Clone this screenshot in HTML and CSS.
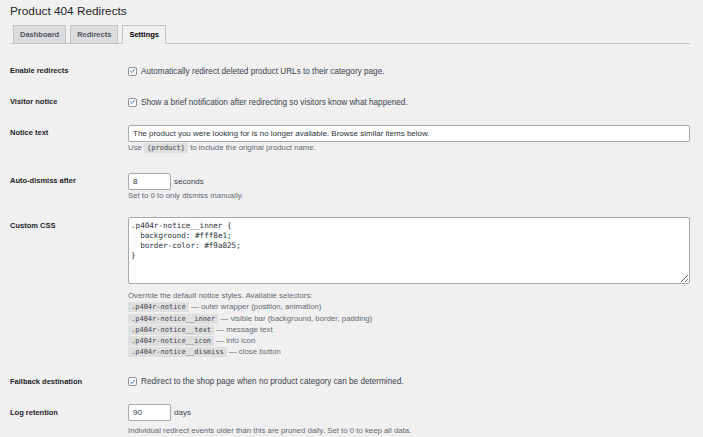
FILE: index.html
```html
<!DOCTYPE html>
<html lang="en">
<head>
<meta charset="utf-8">
<title>Product 404 Redirects</title>
<link rel="stylesheet" href="styles.css">
</head>
<body>
<div class="wrap">
  <h1 class="title">Product 404 Redirects</h1>
  <nav class="tabs">
    <a class="tab">Dashboard</a>
    <a class="tab">Redirects</a>
    <a class="tab tab-active">Settings</a>
  </nav>
  <div class="form">
    <div class="row row-check">
      <div class="label">Enable redirects</div>
      <div class="field">
        <label class="check"><span class="cb"><svg viewBox="0 0 10 10" width="9" height="9"><path d="M2.2 5.2 L4.2 7.2 L7.9 2.6" fill="none" stroke="#2271b1" stroke-width="1.3" stroke-linecap="round" stroke-linejoin="round"/></svg></span>Automatically redirect deleted product URLs to their category page.</label>
      </div>
    </div>
    <div class="row row-check">
      <div class="label">Visitor notice</div>
      <div class="field">
        <label class="check"><span class="cb"><svg viewBox="0 0 10 10" width="9" height="9"><path d="M2.2 5.2 L4.2 7.2 L7.9 2.6" fill="none" stroke="#2271b1" stroke-width="1.3" stroke-linecap="round" stroke-linejoin="round"/></svg></span>Show a brief notification after redirecting so visitors know what happened.</label>
      </div>
    </div>
    <div class="row">
      <div class="label">Notice text</div>
      <div class="field">
        <input class="input input-wide" type="text" value="The product you were looking for is no longer available. Browse similar items below.">
        <p class="desc desc-code">Use <code class="chip">{product}</code> to include the original product name.</p>
      </div>
    </div>
    <div class="row">
      <div class="label">Auto-dismiss after</div>
      <div class="field">
        <div class="inline"><input class="input input-small" type="text" value="8"><span class="unit">seconds</span></div>
        <p class="desc">Set to 0 to only dismiss manually.</p>
      </div>
    </div>
    <div class="row">
      <div class="label">Custom CSS</div>
      <div class="field">
        <textarea class="code-area" rows="6">.p404r-notice__inner {
  background: #fff8e1;
  border-color: #f9a825;
}</textarea>
        <div class="desc desc-list">
          <div>Override the default notice styles. Available selectors:</div>
          <div><code class="chip">.p404r-notice</code> — outer wrapper (position, animation)</div>
          <div><code class="chip">.p404r-notice__inner</code> — visible bar (background, border, padding)</div>
          <div><code class="chip">.p404r-notice__text</code> — message text</div>
          <div><code class="chip">.p404r-notice__icon</code> — info icon</div>
          <div><code class="chip">.p404r-notice__dismiss</code> — close button</div>
        </div>
      </div>
    </div>
    <div class="row row-check">
      <div class="label">Fallback destination</div>
      <div class="field">
        <label class="check"><span class="cb"><svg viewBox="0 0 10 10" width="9" height="9"><path d="M2.2 5.2 L4.2 7.2 L7.9 2.6" fill="none" stroke="#2271b1" stroke-width="1.3" stroke-linecap="round" stroke-linejoin="round"/></svg></span>Redirect to the shop page when no product category can be determined.</label>
      </div>
    </div>
    <div class="row">
      <div class="label">Log retention</div>
      <div class="field">
        <div class="inline"><input class="input input-small" type="text" value="90"><span class="unit">days</span></div>
        <p class="desc desc-late">Individual redirect events older than this are pruned daily. Set to 0 to keep all data.</p>
      </div>
    </div>
  </div>
</div>
</body>
</html>
```

FILE: styles.css
```css
* {
  box-sizing: border-box;
}

html, body {
  margin: 0;
  padding: 0;
  background: #f0f0f1;
}

body {
  font-family: "Liberation Sans", Arial, sans-serif;
  color: #1d2327;
  overflow: hidden;
}

.wrap {
  padding: 0 13px 0 10px;
}

.title {
  margin: 0;
  padding-top: 3px;
  font-size: 11.8px;
  line-height: 16px;
  font-weight: 400;
  color: #1d2327;
}

.tabs {
  display: flex;
  gap: 4px;
  margin-top: 6px;
  padding-left: 3px;
  height: 19px;
  border-bottom: 1px solid #c3c4c7;
}

.tab {
  display: block;
  height: 19px;
  padding: 0 6px;
  border: 1px solid #c3c4c7;
  background: #dcdcde;
  color: #50575e;
  font-weight: 700;
  font-size: 7.5px;
  line-height: 17px;
  text-decoration: none;
}

.tab-active {
  background: #f0f0f1;
  border-bottom-color: #f0f0f1;
  color: #000;
}

.form {
  margin-top: 10.5px;
}

.row {
  display: flex;
  align-items: flex-start;
}

.label {
  flex: 0 0 118px;
  padding-top: 11.5px;
  font-size: 7.5px;
  line-height: 10px;
  font-weight: 700;
  color: #1d2327;
}

.field {
  flex: 1 1 auto;
  min-width: 0;
  padding: 8px 0 8px;
}

.check {
  display: flex;
  align-items: center;
  height: 13px;
  margin-top: 2px;
  font-size: 8.2px;
  color: #3c434a;
}

.cb {
  display: inline-flex;
  align-items: center;
  justify-content: center;
  width: 9px;
  height: 9px;
  margin-right: 4px;
  border: 1px solid #8c8f94;
  border-radius: 2px;
  background: #fff;
}

.cb svg {
  display: block;
  width: 8px;
  height: 8px;
}

.input {
  display: block;
  height: 17px;
  margin: 0;
  padding: 0 4px;
  border: 1px solid #a7aaad;
  border-radius: 2px;
  background: #fff;
  font-family: "Liberation Sans", Arial, sans-serif;
  font-size: 8px;
  color: #2c3338;
  outline: none;
}

.input-wide {
  width: 100%;
}

.input-small {
  width: 43px;
}

.inline {
  display: flex;
  align-items: center;
}

.unit {
  margin-left: 3px;
  font-size: 8px;
  color: #3c434a;
}

.desc {
  margin: 0.5px 0 0;
  font-size: 7.8px;
  line-height: 11.2px;
  color: #646970;
}

.desc-code {
  margin-bottom: 3.5px;
}

.desc-late {
  margin-top: 4px;
}

.chip {
  padding: 1px 3px;
  background: rgba(0, 0, 0, 0.07);
  font-family: "DejaVu Sans Mono", "Liberation Mono", monospace;
  font-size: 7px;
  line-height: 8px;
  color: #3c434a;
}

.code-area {
  display: block;
  width: 100%;
  height: 67px;
  margin: 0;
  padding: 3px 2px;
  border: 1px solid #a7aaad;
  border-radius: 2px;
  background: #fff;
  font-family: "DejaVu Sans Mono", "Liberation Mono", monospace;
  font-size: 7.6px;
  line-height: 10px;
  color: #2c3338;
  outline: none;
}

.desc-list {
  margin-top: 5.8px;
}
```
